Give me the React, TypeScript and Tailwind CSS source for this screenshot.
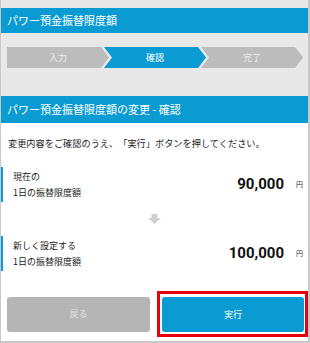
import React from "react";

const BLUE = "bg-[#0a9bd2]";

function Step({ label, active, first }: { label: string; active?: boolean; first?: boolean }) {
  const clip = first
    ? "[clip-path:polygon(0_0,calc(100%_-_8px)_0,100%_50%,calc(100%_-_8px)_100%,0_100%)]"
    : "[clip-path:polygon(0_0,calc(100%_-_8px)_0,100%_50%,calc(100%_-_8px)_100%,0_100%,8px_50%)]";
  return (
    <div
      className={`flex-1 h-[21px] flex items-center justify-center text-[9px] ${clip} ${
        first ? "" : "ml-[-5px]"
      } ${active ? "bg-[#0a9bd2] text-white" : "bg-[#bcbcbc] text-[#ececec]"}`}
    >
      {label}
    </div>
  );
}

function Row({ l1, l2, amount }: { l1: string; l2: string; amount: string }) {
  return (
    <div className="h-[35px] flex items-center border-l-2 border-[#0a9bd2] pl-[10px] pr-[5px]">
      <div className="flex flex-col text-[9px] leading-[16px] text-[#222]">
        <span>{l1}</span>
        <span>{l2}</span>
      </div>
      <div className="ml-auto flex items-center">
        <span className="font-['Roboto',sans-serif] font-bold text-[15px] text-[#111] leading-none">{amount}</span>
        <span className="ml-[12px] text-[7px] text-[#333]">円</span>
      </div>
    </div>
  );
}

export default function App() {
  return (
    <div className="w-[310px] h-[343px] bg-[#e8e8e8] border-l border-r-2 border-b-2 border-[#c8c8c8] pt-[8px] flex flex-col font-['Noto_Sans_CJK_JP',sans-serif] [text-spacing-trim:space-all]">
      <div className={`h-[25px] ${BLUE} px-[6px] flex items-center text-[11px] text-white`}>
        パワー預金振替限度額
      </div>
      <div className="h-[63px] pt-[14px] pl-[6px] pr-[5px]">
        <div className="flex">
          <Step label="入力" first />
          <Step label="確認" active />
          <Step label="完了" />
        </div>
      </div>
      <div className={`h-[27px] ${BLUE} px-[6px] flex items-center text-[11px] text-white`}>
        パワー預金振替限度額の変更 - 確認
      </div>
      <div className="flex-1 bg-white flex flex-col pt-[14px]">
        <p className="px-[7px] text-[9.2px] leading-[13px] text-[#222] whitespace-nowrap">
          変更内容をご確認のうえ、「実行」ボタンを押してください。
        </p>
        <div className="mt-[17px]">
          <Row l1="現在の" l2="1日の振替限度額" amount="90,000" />
        </div>
        <div className="mt-[12px] h-[10px] flex justify-center">
          <svg width="13" height="10" viewBox="0 0 13 10">
            <rect x="3.5" y="0" width="6" height="4.5" fill="#cfcfcf" />
            <polygon points="0,4 13,4 6.5,10" fill="#cfcfcf" />
          </svg>
        </div>
        <div className="mt-[12px]">
          <Row l1="新しく設定する" l2="1日の振替限度額" amount="100,000" />
        </div>
        <div className="mt-[20px] flex items-center pl-[6px]">
          <button className="w-[143px] h-[35px] rounded-[3px] bg-[#b5b5b5] text-[#e4e4e4] text-[9px]">
            戻る
          </button>
          <div className="ml-[7px] w-[151px] h-[46px] border-[3px] border-[#e8000b] pl-[2px] pr-[1px] pt-[3px] pb-[2px]">
            <button className="w-full h-full rounded-[3px] bg-[#0a9bd2] text-white text-[9px]">実行</button>
          </div>
        </div>
      </div>
    </div>
  );
}
